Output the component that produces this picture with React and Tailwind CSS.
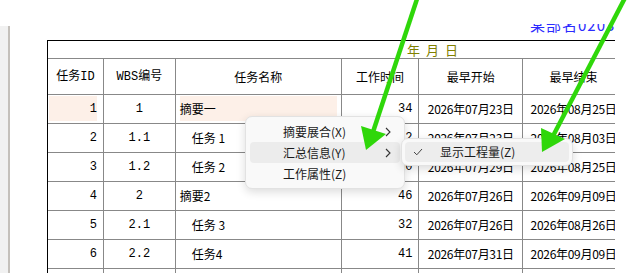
const rows = [
    { id: 1, wbs: "1", name: "摘要一", indent: false, hours: "34", start: "2026年07月23日", end: "2026年08月25日", hl: true },
    { id: 2, wbs: "1.1", name: "任务 1", indent: true, hours: "2", start: "2026年07月23日", end: "2026年08月03日" },
    { id: 3, wbs: "1.2", name: "任务 2", indent: true, hours: "10", start: "2026年07月29日", end: "2026年08月25日" },
    { id: 4, wbs: "2", name: "摘要2", indent: false, hours: "46", start: "2026年07月26日", end: "2026年09月09日" },
    { id: 5, wbs: "2.1", name: "任务 3", indent: true, hours: "32", start: "2026年07月26日", end: "2026年08月26日" },
    { id: 6, wbs: "2.2", name: "任务4", indent: true, hours: "41", start: "2026年07月31日", end: "2026年09月09日" },
]

const mono = "font-['Liberation_Mono','Noto_Sans_CJK_SC',monospace]"
const sans = "font-['Noto_Sans_CJK_SC',sans-serif]"

function Chevron() {
    return (
        <svg width="6" height="10" viewBox="0 0 6 10" className="text-[#333]">
            <path d="M1 1 L5 5 L1 9" fill="none" stroke="currentColor" strokeWidth="1.1" />
        </svg>
    )
}

function App() {
    return (
        <div className="relative w-[627px] h-[273px] overflow-hidden bg-white flex text-black">
            {/* left scroll strip */}
            <div className="mt-[26px] w-[10px] shrink-0 bg-[#f1f1f1] border-r-2 border-[#c4c0bb]" />

            <div className="ml-[37px] w-[568px] shrink-0 overflow-hidden">
                <div className="h-[40px] flex flex-col justify-end">
                    <div className="h-[16px] overflow-hidden">
                        <div className={`pl-[483px] whitespace-nowrap text-[15px] leading-[15px] -mt-[7px] tracking-[1px] text-[#2b2bff] ${sans}`}>
                            某部名02031
                        </div>
                    </div>
                </div>

                <div className="w-[578px] border-l border-t border-black">
                    <div className={`h-[18px] border-b border-[#888] pl-[359px] flex items-center gap-[6px] text-[13px] text-[#808000] ${sans}`}>
                        <span>年</span>
                        <span>月</span>
                        <span>日</span>
                    </div>

                    <div className={`flex h-[36px] border-b border-[#888] text-[12px] ${sans}`}>
                        <div className={`w-[56px] border-r border-[#888] flex items-center justify-center ${mono}`}>任务ID</div>
                        <div className={`w-[72px] border-r border-[#888] flex items-center justify-center ${mono}`}>WBS编号</div>
                        <div className="w-[166px] border-r border-[#888] flex items-center justify-center">任务名称</div>
                        <div className="w-[78px] border-r border-[#888] flex items-center justify-center">工作时间</div>
                        <div className="w-[104px] border-r border-[#888] flex items-center justify-center">最早开始</div>
                        <div className="w-[102px] border-r border-[#888] flex items-center justify-center">最早结束</div>
                    </div>

                    {rows.map((r) => (
                        <div key={r.id} className="flex h-[29px] border-b border-[#888] text-[12px]">
                            <div className={`w-[56px] border-r border-[#888] pl-[1px] pr-[6px] pt-[1px] pb-[2px] ${mono}`}>
                                <div className={`h-full flex items-center justify-end ${r.hl ? "bg-[#fdf0e8]" : ""}`}>{r.id}</div>
                            </div>
                            <div className={`w-[72px] border-r border-[#888] flex items-center justify-center ${mono}`}>{r.wbs}</div>
                            <div className={`w-[166px] border-r border-[#888] pl-[4px] pr-[4px] pt-[1px] pb-[2px] ${sans}`}>
                                <div className={`h-full flex items-center ${r.indent ? "pl-[12px]" : ""} ${r.hl ? "bg-[#fdf0e8]" : ""}`}>{r.name}</div>
                            </div>
                            <div className={`w-[78px] border-r border-[#888] flex items-center justify-end pr-[6px] ${mono}`}>{r.hours}</div>
                            <div className={`w-[104px] border-r border-[#888] flex items-center justify-center tracking-[-0.3px] ${sans}`}>{r.start}</div>
                            <div className={`w-[102px] border-r border-[#888] flex items-center justify-center tracking-[-0.3px] ${sans}`}>{r.end}</div>
                        </div>
                    ))}
                    <div className="flex h-[29px]">
                        <div className="w-[56px] border-r border-[#888]" />
                        <div className="w-[72px] border-r border-[#888]" />
                        <div className="w-[166px] border-r border-[#888]" />
                        <div className="w-[78px] border-r border-[#888]" />
                        <div className="w-[104px] border-r border-[#888]" />
                        <div className="w-[102px] border-r border-[#888]" />
                    </div>
                </div>
            </div>

            {/* context menu */}
            <div className={`absolute left-[245px] top-[116px] w-[160px] p-[4px] rounded-[7px] bg-[#f9f9f9] border border-[#e2e2e2] shadow-[0_3px_10px_rgba(0,0,0,0.14)] text-[12px] text-[#1a1a1a] ${sans}`}>
                <div className="h-[21px] flex items-center pl-[33px] pr-[9px] justify-between">
                    <span>摘要展合(X)</span>
                    <Chevron />
                </div>
                <div className="h-[21px] flex items-center pl-[33px] pr-[9px] justify-between rounded-[4px] bg-[#ececec]">
                    <span>汇总信息(Y)</span>
                    <Chevron />
                </div>
                <div className="h-[21px] flex items-center pl-[33px] pr-[9px]">
                    <span>工作属性(Z)</span>
                </div>
            </div>

            {/* submenu */}
            <div className={`absolute left-[401px] top-[138px] w-[172px] p-[3px] rounded-[7px] bg-[#f9f9f9] border border-[#e2e2e2] shadow-[0_3px_10px_rgba(0,0,0,0.14)] text-[12px] text-[#1a1a1a] ${sans}`}>
                <div className="h-[20px] flex items-center rounded-[4px] bg-[#ededed] pl-[8px]">
                    <svg width="10" height="8" viewBox="0 0 10 8" className="text-[#444]">
                        <path d="M1 4 L3.8 6.8 L9 1" fill="none" stroke="currentColor" strokeWidth="1" />
                    </svg>
                    <span className="ml-[17px]">显示工程量(Z)</span>
                </div>
            </div>

            {/* green arrows */}
            <svg className="absolute inset-0 pointer-events-none" width="627" height="273" viewBox="0 0 627 273">
                <line x1="418" y1="-4" x2="373" y2="132" stroke="#2fd70a" strokeWidth="4.5" />
                <polygon points="366,150 361,126 386,134" fill="#2fd70a" />
                <line x1="626" y1="-4" x2="553" y2="136" stroke="#2fd70a" strokeWidth="4.5" />
                <polygon points="542,152 541,128 565,139" fill="#2fd70a" />
            </svg>
        </div>
    )
}

export default App
